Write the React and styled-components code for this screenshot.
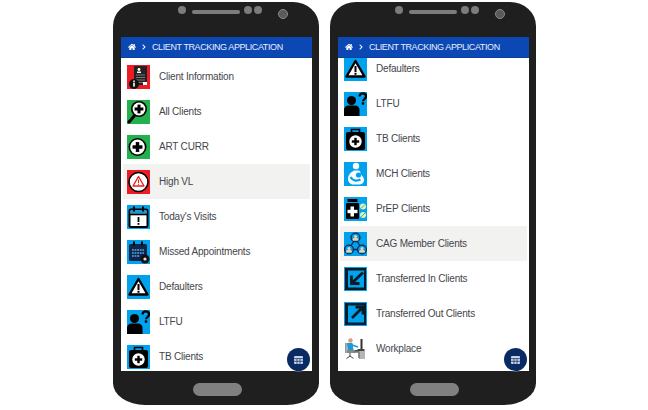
import React from "react";
import styled, { createGlobalStyle } from "styled-components";
import { FaHome, FaChevronRight } from "react-icons/fa";

const GlobalStyle = createGlobalStyle`
  html, body {
    margin: 0;
    padding: 0;
    background: #fff;
    font-family: "Liberation Sans", Arial, sans-serif;
  }
`;

const Page = styled.div`
  width: 648px;
  height: 410px;
  display: flex;
  gap: 11px;
  padding: 2px 0 0 113px;
  box-sizing: border-box;
  overflow: hidden;
`;

const Phone = styled.div`
  position: relative;
  width: 206px;
  height: 403px;
  padding: 0 7px 0 8px;
  box-sizing: border-box;
  display: flex;
  flex-direction: column;
  background: #1f1f1f;
  border-radius: 26px 26px 32px 32px / 24px 24px 22px 22px;
`;

const TopBezel = styled.div`
  height: 35px;
  flex: none;
  display: flex;
  align-items: flex-start;
  padding: 4px 0 0 57px;
  box-sizing: border-box;
`;

const Dot = styled.span`
  width: 8px;
  height: 8px;
  flex: none;
  margin-right: ${(p) => p.$after || 0}px;
  border-radius: 50%;
  background: #7c7c7c;
`;

const Speaker = styled.span`
  width: 48px;
  height: 4px;
  flex: none;
  margin: 4px 4px 0 6px;
  border-radius: 2px;
  background: #7c7c7c;
`;

const Camera = styled.span`
  width: 8px;
  height: 8px;
  flex: none;
  margin: 3px 0 0 16px;
  border-radius: 50%;
  background: #5a5a5a;
  border: 1px solid #8a8a8a;
`;

const Screen = styled.div`
  flex: none;
  height: 334px;
  display: flex;
  flex-direction: column;
  background: #fff;
  overflow: hidden;
`;

const Header = styled.div`
  position: relative;
  z-index: 1;
  flex: none;
  height: 20px;
  display: flex;
  align-items: center;
  padding-left: 7px;
  background: #0b48b4;
  border-bottom: 1px solid #0a3f9e;
  color: #e8eefc;
`;

const Title = styled.span`
  margin-left: 5px;
  font-size: 9px;
  letter-spacing: -0.4px;
  white-space: nowrap;
`;

const Crumb = styled.span`
  display: flex;
  margin-left: ${(p) => p.$left || 0}px;
  font-size: ${(p) => p.$size}px;
  color: #fff;
`;

const List = styled.div`
  flex: none;
  margin-top: ${(p) => p.$offset}px;
`;

const Row = styled.div`
  height: 35px;
  margin: 0 2px;
  display: flex;
  align-items: center;
  padding-left: 4px;
  background: ${(p) => (p.$active ? "#f2f2f0" : "transparent")};
`;

const IconBox = styled.span`
  width: 23px;
  height: 24px;
  flex: none;
  display: flex;
`;

const Label = styled.span`
  margin-left: 9px;
  font-size: 10px;
  letter-spacing: -0.2px;
  color: #45454b;
  white-space: nowrap;
`;

const BottomBezel = styled.div`
  flex: 1;
  display: flex;
  justify-content: center;
  padding-top: 12px;
  padding-left: 1px;
`;

const HomeButton = styled.span`
  width: 49px;
  height: 13px;
  border-radius: 7px;
  background: #808080;
`;

const Fab = styled.span`
  position: absolute;
  left: 174px;
  top: 346px;
  width: 23px;
  height: 23px;
  display: flex;
  align-items: center;
  justify-content: center;
  border-radius: 50%;
  background: #0a2a63;
  box-shadow: 0 0 0 1px rgba(255, 255, 255, 0.3);
`;

const Svg = ({ bg, children }) => (
  <svg width="23" height="24" viewBox="0 0 23 24">
    <rect width="23" height="24" fill={bg} />
    {children}
  </svg>
);

const PlusDisc = ({ cx, cy, r, ring = "#000" }) => (
  <>
    <circle cx={cx} cy={cy} r={r} fill={ring} />
    <circle cx={cx} cy={cy} r={r - 1.6} fill="#fff" />
    <rect x={cx - r * 0.55} y={cy - r * 0.19} width={r * 1.1} height={r * 0.38} fill="#000" />
    <rect x={cx - r * 0.19} y={cy - r * 0.55} width={r * 0.38} height={r * 1.1} fill="#000" />
  </>
);

const Person = ({ cx, cy }) => (
  <>
    <circle cx={cx} cy={cy} r="4.4" fill="#00a2ed" stroke="#10254a" strokeWidth="1.300" />
    <circle cx={cx} cy={cy - 1} r="1.500" fill="#f3cfa8" />
    <path d={`M${cx - 3} ${cy + 3}c0-2.200 1.200-2.800 3-2.800s3 .6 3 2.800Z`} fill="#f3cfa8" />
  </>
);

const icons = {
  info: (
    <Svg bg="#ed1c24">
      <rect x="7" y="1" width="13" height="19" fill="#222" />
      <circle cx="12" cy="4.5" r="1.4" fill="#fff" />
      <rect x="10" y="6.5" width="4" height="1.5" fill="#fff" />
      <path d="M9 10h9M9 12.500h9M9 15h9M9 17.500h9" stroke="#777" strokeWidth="1" />
      <rect x="16" y="17" width="4" height="3" fill="#fff" />
      <circle cx="7" cy="19" r="5" fill="#111" />
      <rect x="6.200" y="17.600" width="1.600" height="4" fill="#fff" />
      <rect x="6.200" y="15.500" width="1.600" height="1.400" fill="#fff" />
    </Svg>
  ),
  search: (
    <Svg bg="#22b14c">
      <path d="M8 15L2 22" stroke="#000" strokeWidth="3" strokeLinecap="round" />
      <PlusDisc cx={12} cy={9} r={8} />
    </Svg>
  ),
  art: (
    <Svg bg="#22b14c">
      <PlusDisc cx={10.5} cy={12} r={9} />
    </Svg>
  ),
  vl: (
    <Svg bg="#ed1c24">
      <circle cx="11.5" cy="12" r="9.5" fill="#fff" stroke="#000" strokeWidth="1.6" />
      <path d="M11.5 6.5L17 16H6Z" fill="#fff" stroke="#ed1c24" strokeWidth="1.4" strokeLinejoin="round" />
      <rect x="11" y="9.5" width="1" height="3.5" fill="#ed1c24" />
      <rect x="11" y="13.8" width="1" height="1" fill="#ed1c24" />
    </Svg>
  ),
  today: (
    <Svg bg="#00a2ed">
      <rect x="2.500" y="4.500" width="18" height="17.500" rx="1.500" fill="#fff" stroke="#000" strokeWidth="2" />
      <rect x="3.500" y="5.500" width="16" height="3" fill="#00a2ed" />
      <rect x="2" y="8.500" width="19" height="1.800" fill="#000" />
      <rect x="6" y="1.500" width="2" height="5" fill="#000" />
      <rect x="15" y="1.500" width="2" height="5" fill="#000" />
      <rect x="10.600" y="12" width="1.800" height="5" fill="#000" />
      <rect x="10.600" y="18" width="1.800" height="1.800" fill="#000" />
    </Svg>
  ),
  missed: (
    <Svg bg="#00a2ed">
      <rect x="2" y="4" width="18" height="17" rx="1.500" fill="#10254a" />
      <rect x="6" y="1.500" width="2" height="4" fill="#000" />
      <rect x="14" y="1.500" width="2" height="4" fill="#000" />
      <path d="M5 10h12M5 13h12M5 16h8" stroke="#5aa9e6" strokeWidth="1.600" strokeDasharray="1.800 0.800" />
      <circle cx="18" cy="19" r="4.500" fill="#111" />
      <circle cx="18" cy="19" r="1.600" fill="#ddd" />
    </Svg>
  ),
  warn: (
    <Svg bg="#00a2ed">
      <path d="M11.500 4L20.500 19.500H2.500Z" fill="#fff" stroke="#000" strokeWidth="2.400" strokeLinejoin="round" />
      <rect x="10.500" y="9" width="2" height="6" fill="#000" />
      <rect x="10.500" y="15.800" width="2" height="2" fill="#000" />
    </Svg>
  ),
  ltfu: (
    <Svg bg="#00a2ed">
      <circle cx="7.500" cy="8.500" r="4.500" fill="#000" />
      <path d="M0 24v-6c0-3 2-4.500 4.500-4.500h6.500c2.500 0 4.500 1.500 4.500 4.500v6Z" fill="#000" />
      <path d="M15.500 4.500c0-2 1.500-3.200 3.300-3.200s3.300 1.200 3.300 3c0 2.500-3 2.500-3 5" fill="none" stroke="#000" strokeWidth="2.200" />
      <rect x="17.800" y="10.300" width="2.400" height="2.400" fill="#000" />
    </Svg>
  ),
  tb: (
    <Svg bg="#00a2ed">
      <path d="M7.500 5V2.500h8V5" fill="none" stroke="#000" strokeWidth="1.600" />
      <rect x="2" y="5" width="19" height="18" rx="2" fill="#000" />
      <circle cx="11.500" cy="14.500" r="6.200" fill="#fff" />
      <rect x="7.800" y="13.300" width="7.400" height="2.400" fill="#000" />
      <rect x="10.300" y="10.800" width="2.400" height="7.400" fill="#000" />
    </Svg>
  ),
  mch: (
    <Svg bg="#00a2ed">
      <circle cx="12" cy="4" r="3.200" fill="#fff" />
      <path d="M10 8.500h4c3 0 2 2.500 3 4 1.500 1.500 3 3 3 5.500 0 3-2.500 4.500-5 4.500h-5c-3.500 0-6-2-6-5.500 0-4 3-7 6-8.500Z" fill="#fff" />
      <circle cx="14.500" cy="13" r="2.600" fill="#00a2ed" />
      <path d="M6.500 15c2 3.500 6 4.500 10 2.500" fill="none" stroke="#00a2ed" strokeWidth="2.400" />
    </Svg>
  ),
  prep: (
    <Svg bg="#00a2ed">
      <rect x="3.500" y="2" width="10" height="3" fill="#000" />
      <rect x="2" y="6" width="13" height="16" rx="1" fill="#000" />
      <rect x="6.500" y="9.500" width="3.500" height="10" fill="#fff" />
      <rect x="3.500" y="12.800" width="10" height="3.400" fill="#fff" />
      <circle cx="19" cy="9.500" r="3" fill="#e6f3a8" />
      <circle cx="19" cy="18" r="3" fill="#e6f3a8" />
      <path d="M17 11.500l4-4M17 20l4-4" stroke="#00a2ed" strokeWidth="0.800" />
    </Svg>
  ),
  cag: (
    <Svg bg="#00a2ed">
      <path d="M11.500 6L5 17.500H18Z" fill="none" stroke="#10254a" strokeWidth="1.300" />
      <Person cx={11.5} cy={5.5} />
      <Person cx={5} cy={17.5} />
      <Person cx={18} cy={17.5} />
    </Svg>
  ),
  tin: (
    <Svg bg="#00a2ed">
      <rect x="1" y="1" width="21" height="22" fill="#0c1a26" />
      <rect x="4" y="3.500" width="16" height="17" fill="#00a2ed" />
      <path d="M19 5.500L8.500 15.500M7.500 8.500V16.500H15.500" fill="none" stroke="#0c1a26" strokeWidth="2.800" />
    </Svg>
  ),
  tout: (
    <Svg bg="#00a2ed">
      <rect x="1" y="1" width="21" height="22" fill="#0c1a26" />
      <rect x="4" y="3.500" width="16" height="17" fill="#00a2ed" />
      <path d="M8 16L18.500 5.500M11.500 5H19V12.500" fill="none" stroke="#0c1a26" strokeWidth="2.800" />
    </Svg>
  ),
  work: (
    <Svg bg="#fff">
      <rect x="5" y="13" width="11" height="2" fill="#555" />
      <rect x="14.500" y="14" width="6.500" height="8" fill="#b5b5b5" />
      <circle cx="6.500" cy="3.500" r="2.200" fill="#d99a6c" />
      <path d="M3 6h5.500l1 7H3.500Z" fill="#1d9ad6" />
      <path d="M8 8l6 2" stroke="#1d9ad6" strokeWidth="1.500" />
      <rect x="3" y="13" width="8" height="3" fill="#888" />
      <path d="M10 15h5v6" fill="none" stroke="#777" strokeWidth="1.500" />
      <rect x="1" y="6" width="1.800" height="10" fill="#999" />
      <path d="M6 16v3M2.500 21.500L6 19l3.500 2.500" fill="none" stroke="#444" strokeWidth="1" />
      <rect x="16.500" y="2" width="2" height="11" fill="#333" />
      <rect x="13.500" y="12" width="7" height="2" fill="#444" />
    </Svg>
  ),
};

const menu = [
  ["info", "Client Information"],
  ["search", "All Clients"],
  ["art", "ART CURR"],
  ["vl", "High VL"],
  ["today", "Today's Visits"],
  ["missed", "Missed Appointments"],
  ["warn", "Defaulters"],
  ["ltfu", "LTFU"],
  ["tb", "TB Clients"],
  ["mch", "MCH Clients"],
  ["prep", "PrEP Clients"],
  ["cag", "CAG Member Clients"],
  ["tin", "Transferred In Clients"],
  ["tout", "Transferred Out Clients"],
  ["work", "Workplace"],
];

function Device({ rows, offset, active }) {
  return (
    <Phone>
      <TopBezel>
        <Dot />
        <Speaker />
        <Dot $after={2} />
        <Dot />
        <Camera />
      </TopBezel>
      <Screen>
        <Header>
          <Crumb $size={8}>
            <FaHome />
          </Crumb>
          <Crumb $size={6} $left={5}>
            <FaChevronRight />
          </Crumb>
          <Title>CLIENT TRACKING APPLICATION</Title>
        </Header>
        <List $offset={offset}>
          {rows.map(([icon, label]) => (
            <Row key={label} $active={label === active}>
              <IconBox>{icons[icon]}</IconBox>
              <Label>{label}</Label>
            </Row>
          ))}
        </List>
      </Screen>
      <BottomBezel>
        <HomeButton />
      </BottomBezel>
      <Fab>
        <svg width="9" height="8" viewBox="0 0 9 8">
          <rect width="9" height="8" rx="1" fill="#c6d3e6" />
          <path d="M0 2.600h9M0 5.300h9M3 2.600v5.400M6 2.600v5.400" stroke="#0a2a63" strokeWidth="0.700" />
        </svg>
      </Fab>
    </Phone>
  );
}

export default function App() {
  return (
    <>
      <GlobalStyle />
      <Page>
        <Device rows={menu.slice(0, 9)} offset={1} active="High VL" />
        <Device rows={menu.slice(6)} offset={-7} active="CAG Member Clients" />
      </Page>
    </>
  );
}
